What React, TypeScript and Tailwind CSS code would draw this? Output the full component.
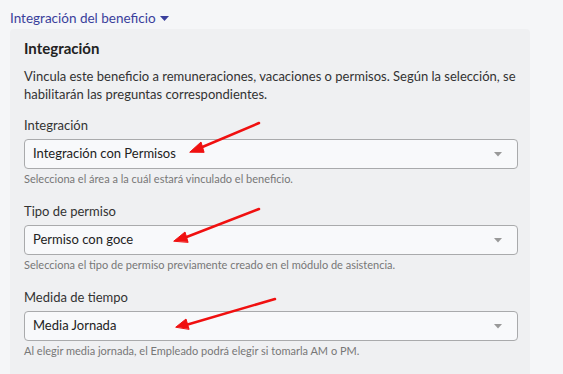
import React from "react";

function Field({ label, value, help, first }: { label: string; value: string; help: string; first?: boolean }) {
  return (
    <div className={first ? "mt-[13px]" : "mt-[16px]"}>
      <div className="text-[13px] leading-[18px] text-[#333]">{label}</div>
      <div className="mt-[5px] h-[30px] w-[494px] rounded-[4px] border border-[#a9aaac] bg-[#f8f9fb] flex items-center justify-between pl-[8px] pr-[15px]">
        <span className="text-[13px] text-[#222]">{value}</span>
        <svg width="8" height="5" viewBox="0 0 8 5"><path d="M0 0 L8 0 L4 4.5 Z" fill="#999" /></svg>
      </div>
      <div className="mt-[3px] text-[11px] leading-[14px] text-[#777]">{help}</div>
    </div>
  );
}

export default function App() {
  return (
    <div className="relative w-[563px] h-[374px] overflow-hidden bg-[#f5f6f8]" style={{ fontFamily: "Lato, 'Noto Sans', sans-serif" }}>
      <div className="pl-[10px] pt-[10px] flex items-center gap-[4px] text-[13.5px] leading-[17px] text-[#3a3f9c]">
        <span>Integración del beneficio</span>
        <svg width="9" height="6" viewBox="0 0 9 6"><path d="M0 0 L9 0 L4.5 5 Z" fill="#3a3f9c" /></svg>
      </div>
      <div className="ml-[10px] mt-[2px] w-[520px] h-[400px] rounded-t-[4px] bg-[#eff0f2] px-[14px] pt-[9px]">
        <div className="text-[15px] font-bold leading-[20px] text-[#222]">Integración</div>
        <div className="mt-[9px] text-[13px] leading-[18px] text-[#333] whitespace-nowrap">
          Vincula este beneficio a remuneraciones, vacaciones o permisos. Según la selección, se
          <br />
          habilitarán las preguntas correspondientes.
        </div>
        <Field first label="Integración" value="Integración con Permisos" help="Selecciona el área a la cuál estará vinculado el beneficio." />
        <Field label="Tipo de permiso" value="Permiso con goce" help="Selecciona el tipo de permiso previamente creado en el módulo de asistencia." />
        <Field label="Medida de tiempo" value="Media Jornada" help="Al elegir media jornada, el Empleado podrá elegir si tomarla AM o PM." />
      </div>
      <svg className="absolute left-0 top-0 pointer-events-none" width="563" height="374" viewBox="0 0 563 374">
        <g stroke="#f01010" strokeWidth="2.5" strokeLinecap="round" fill="#f01010">
          <line x1="259" y1="123" x2="200" y2="148" />
          <path d="M190 152 L201 142 L204 152 Z" strokeWidth="1" strokeLinejoin="round" />
          <line x1="259" y1="209" x2="184" y2="238" />
          <path d="M174 241 L185 232 L188 242 Z" strokeWidth="1" strokeLinejoin="round" />
          <line x1="275" y1="299" x2="186" y2="325" />
          <path d="M176 327 L186 319 L189 329 Z" strokeWidth="1" strokeLinejoin="round" />
        </g>
      </svg>
    </div>
  );
}
